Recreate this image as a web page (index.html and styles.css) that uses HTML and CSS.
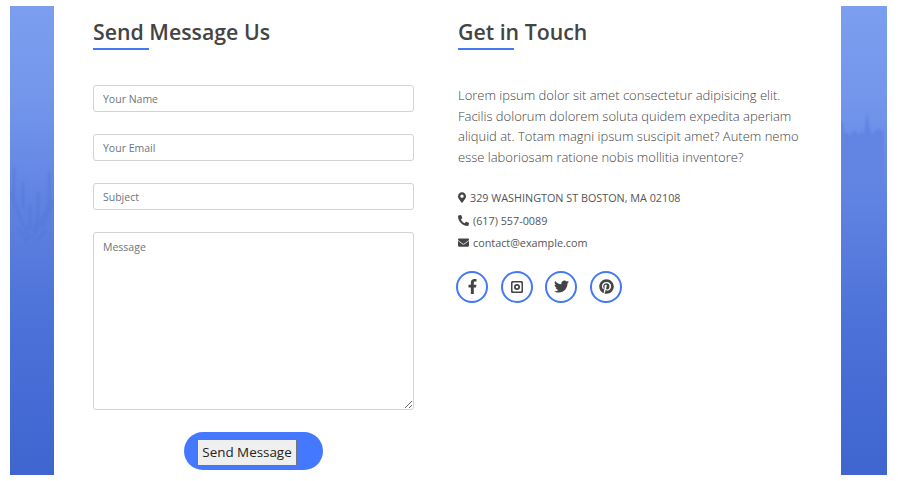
FILE: index.html
```html
<!DOCTYPE html>
<html lang="en">
<head>
  <meta charset="UTF-8">
  <title>Contact</title>
  <link rel="stylesheet" href="styles.css">
</head>
<body>
  <div class="shell">
    <!-- left strip of the page background -->
    <div class="strip strip-left">
      <svg class="trees" viewBox="0 0 44 469" preserveAspectRatio="none">
        <defs>
          <filter id="soft"><feGaussianBlur stdDeviation="0.8"/></filter>
          <linearGradient id="fade" x1="0" y1="0" x2="0" y2="1">
            <stop offset="0" stop-color="#4f72d8" stop-opacity="0.55"/>
            <stop offset="1" stop-color="#4f72d8" stop-opacity="0"/>
          </linearGradient>
        </defs>
        <g filter="url(#soft)" fill="none" stroke="#4e72d8" stroke-opacity="0.42" stroke-width="3">
          <path d="M4 162v34l8 20 8 16M0 186l12 30M13 176v26M39 166v32l-9 20-8 14M44 194l-12 28M28 186v24l-4 16M20 198v26M8 222l10 14M36 224l-10 12"/>
        </g>
      </svg>
    </div>

    <main class="content">
      <section class="col col-form">
        <h2 class="title">Send Message Us</h2>
        <form class="contact-form">
          <input class="field" type="text" placeholder="Your Name">
          <input class="field" type="text" placeholder="Your Email">
          <input class="field" type="text" placeholder="Subject">
          <textarea class="field field-area" placeholder="Message"></textarea>
          <div class="send-wrap">
            <span class="send-pill"><button type="button" class="send-btn">Send Message</button></span>
          </div>
        </form>
      </section>

      <section class="col col-info">
        <h2 class="title">Get in Touch</h2>
        <p class="intro">Lorem ipsum dolor sit amet consectetur adipisicing elit. Facilis dolorum dolorem soluta quidem expedita aperiam aliquid at. Totam magni ipsum suscipit amet? Autem nemo esse laboriosam ratione nobis mollitia inventore?</p>
        <ul class="details">
          <li>
            <svg class="ico ico-pin" viewBox="0 0 384 512"><path d="M172.268 501.67C26.97 291.031 0 268.413 0 192 0 85.961 85.961 0 192 0s192 85.961 192 192c0 76.413-26.97 99.031-172.268 309.67-9.535 13.774-29.93 13.773-39.464 0zM192 272c44.183 0 80-35.817 80-80s-35.817-80-80-80-80 35.817-80 80 35.817 80 80 80z"/></svg>
            329 WASHINGTON ST BOSTON, MA 02108
          </li>
          <li>
            <svg class="ico" viewBox="0 0 512 512"><path d="M497.39 361.8l-112-48a24 24 0 0 0-28 6.9l-49.6 60.6A370.66 370.66 0 0 1 130.6 204.11l60.6-49.6a23.94 23.94 0 0 0 6.9-28l-48-112A24.16 24.16 0 0 0 122.6.61l-104 24A24 24 0 0 0 0 48c0 256.5 207.9 464 464 464a24 24 0 0 0 23.4-18.6l24-104a24.29 24.29 0 0 0-14.01-27.6z"/></svg>
            (617) 557-0089
          </li>
          <li>
            <svg class="ico" viewBox="0 0 512 512"><path d="M502.3 190.8c3.9-3.1 9.7-.2 9.7 4.7V400c0 26.5-21.5 48-48 48H48c-26.5 0-48-21.5-48-48V195.6c0-5 5.7-7.8 9.7-4.7 22.4 17.4 52.1 39.5 154.1 113.6 21.1 15.4 56.7 47.8 92.2 47.6 35.7.3 72-32.8 92.3-47.6 102-74.1 131.6-96.3 154-113.7zM256 320c23.2.4 56.6-29.2 73.4-41.4 132.7-96.3 142.8-104.7 173.4-128.7 5.8-4.5 9.2-11.5 9.2-18.9v-19c0-26.5-21.5-48-48-48H48C21.5 64 0 85.5 0 112v19c0 7.4 3.4 14.3 9.2 18.9 30.6 23.9 40.7 32.4 173.4 128.7 16.8 12.2 50.2 41.8 73.4 41.4z"/></svg>
            contact@example.com
          </li>
        </ul>
        <div class="social">
          <a class="social-link" href="#">
            <svg class="social-ico" viewBox="0 0 320 512"><path d="M279.14 288l14.22-92.66h-88.91v-60.13c0-25.35 12.42-50.06 52.24-50.06h40.42V6.26S260.43 0 225.36 0c-73.22 0-121.08 44.38-121.08 124.72v70.62H22.89V288h81.39v224h100.17V288z"/></svg>
          </a>
          <a class="social-link" href="#">
            <svg class="social-ico ico-insta" viewBox="0 0 24 24"><path fill-rule="evenodd" d="M3 0h18a3 3 0 0 1 3 3v18a3 3 0 0 1-3 3H3a3 3 0 0 1-3-3V3a3 3 0 0 1 3-3zm2 3A2 2 0 0 0 3 5v14a2 2 0 0 0 2 2h14a2 2 0 0 0 2-2V5a2 2 0 0 0-2-2zM12 6a6 6 0 1 1 0 12 6 6 0 0 1 0-12zm0 3.500a2.500 2.500 0 1 0 0 5 2.500 2.500 0 0 0 0-5z"/></svg>
          </a>
          <a class="social-link" href="#">
            <svg class="social-ico" viewBox="0 0 512 512"><path d="M459.37 151.716c.325 4.548.325 9.097.325 13.645 0 138.72-105.583 298.558-298.558 298.558-59.452 0-114.68-17.219-161.137-47.106 8.447.974 16.568 1.299 25.34 1.299 49.055 0 94.213-16.568 130.274-44.832-46.132-.975-84.792-31.188-98.112-72.772 6.498.974 12.995 1.624 19.818 1.624 9.421 0 18.843-1.3 27.614-3.573-48.081-9.747-84.143-51.98-84.143-102.985v-1.299c13.969 7.797 30.214 12.67 47.431 13.319-28.264-18.843-46.781-51.005-46.781-87.391 0-19.492 5.197-37.36 14.294-52.954 51.655 63.675 129.3 105.258 216.365 109.807-1.624-7.797-2.599-15.918-2.599-24.04 0-57.828 46.782-104.934 104.934-104.934 30.213 0 57.502 12.67 76.67 33.137 23.715-4.548 46.456-13.32 66.599-25.34-7.798 24.366-24.366 44.833-46.132 57.827 21.117-2.273 41.584-8.122 60.426-16.243-14.292 20.791-32.161 39.308-52.628 54.253z"/></svg>
          </a>
          <a class="social-link" href="#">
            <svg class="social-ico" viewBox="0 0 496 512"><path d="M496 256c0 137-111 248-248 248-25.6 0-50.2-3.9-73.4-11.1 10.1-16.5 25.2-43.5 30.8-65 3-11.6 15.4-59 15.4-59 8.1 15.4 31.7 28.5 56.8 28.5 74.8 0 128.7-68.8 128.7-154.3 0-81.9-66.9-143.2-152.9-143.2-107 0-163.9 71.8-163.9 150.1 0 36.4 19.4 81.7 50.3 96.1 4.7 2.2 7.2 1.2 8.3-3.3.8-3.4 5-20.3 6.9-28.1.6-2.5.3-4.7-1.7-7.1-10.1-12.5-18.3-35.3-18.3-56.6 0-54.7 41.4-107.6 112-107.6 60.9 0 103.6 41.5 103.6 100.9 0 67.1-33.9 113.6-78 113.6-24.3 0-42.6-20.1-36.7-44.8 7-29.5 20.5-61.3 20.5-82.6 0-19-10.2-34.9-31.4-34.9-24.9 0-44.9 25.7-44.9 60.2 0 22 7.4 36.8 7.4 36.8s-24.5 103.8-29 123.2c-5 21.4-3 51.6-.9 71.2C65.4 450.9 0 361.1 0 256 0 119 111 8 248 8s248 111 248 248z"/></svg>
          </a>
        </div>
      </section>
    </main>

    <!-- right strip of the page background -->
    <div class="strip strip-right">
      <svg class="trees" viewBox="0 0 46 469" preserveAspectRatio="none">
        <g filter="url(#soft)" fill="url(#fade)">
          <path d="M0 116l2 0 1 12 3-2 2 4 4-4 3-2 2 6 3-4 3 2 2-14 1-10 1 10 2 10 3 4 3-4 3-2 3 4 2-4v70H0z"/>
        </g>
      </svg>
    </div>
  </div>
</body>
</html>
```

FILE: styles.css
```css
* {
  box-sizing: border-box;
}

body {
  margin: 0;
  background-color: white;
  font-family: "Open Sans", "Noto Sans", sans-serif;
  color: #444;
}

.shell {
  display: flex;
  height: 469px;
  margin: 6px 11px 6px 10px;
}

.strip {
  flex: none;
  width: 44px;
  background: linear-gradient(to bottom, #7c9ef0 0%, #7396ec 20%, #5f83e2 42%, #4c71d8 68%, #3f65cf 100%);
}

.strip-right {
  width: 46px;
}

.trees {
  display: block;
  width: 100%;
  height: 100%;
}

.content {
  flex: 1;
  display: flex;
  gap: 44px;
  padding: 0 39px;
  background-color: white;
}

.col-form {
  flex: none;
  width: 321px;
}

.col-info {
  flex: 1;
}

.title {
  margin: 10px 0 0;
  padding-bottom: 4px;
  font-size: 21.3px;
  line-height: 32px;
  font-weight: 600;
  color: #444;
}

.title::after {
  content: "";
  display: block;
  width: 56px;
  height: 2px;
  background-color: #4478f5;
}

.contact-form {
  display: flex;
  flex-direction: column;
  margin-top: 31px;
}

.field {
  width: 100%;
  height: 27px;
  margin-bottom: 22px;
  padding: 0 9px;
  border: 1px solid #d0d3d6;
  border-radius: 3px;
  font-family: inherit;
  font-size: 10.5px;
  color: #555;
  background-color: white;
}

.field::placeholder {
  color: #6c757d;
  opacity: 1;
}

.field-area {
  height: 178px;
  padding-top: 7px;
  resize: vertical;
}

.send-wrap {
  display: flex;
  justify-content: center;
}

.send-pill {
  display: flex;
  align-items: center;
  width: 139px;
  height: 38px;
  padding: 2px 0 0 13px;
  border-radius: 19px;
  background-color: #4478ff;
}

.send-btn {
  width: 100px;
  height: 27px;
  padding: 0;
  border: 1px solid #767676;
  border-radius: 0;
  background-color: #efefef;
  font-family: inherit;
  font-size: 13.4px;
  color: #222;
}

.intro {
  margin: 31px 0 0;
  font-size: 13px;
  line-height: 20.6px;
  font-weight: 300;
  color: #444;
}

.details {
  list-style: none;
  margin: 19px 0 0;
  padding: 0;
  font-size: 10.8px;
  color: #555;
}

.details li {
  display: flex;
  align-items: center;
  gap: 4px;
  height: 22.500px;
}

.ico {
  width: 11px;
  height: 11px;
  fill: #444;
}

.ico-pin {
  width: 8px;
}

.social {
  display: flex;
  gap: 12.700px;
  margin-top: 17px;
  margin-left: -2px;
}

.social-link {
  display: flex;
  align-items: center;
  justify-content: center;
  width: 32px;
  height: 32px;
  border: 2px solid #4478f5;
  border-radius: 50%;
}

.social-ico {
  width: 15px;
  height: 15px;
  fill: #444;
}

.ico-insta {
  width: 12px;
  height: 12px;
}
```
